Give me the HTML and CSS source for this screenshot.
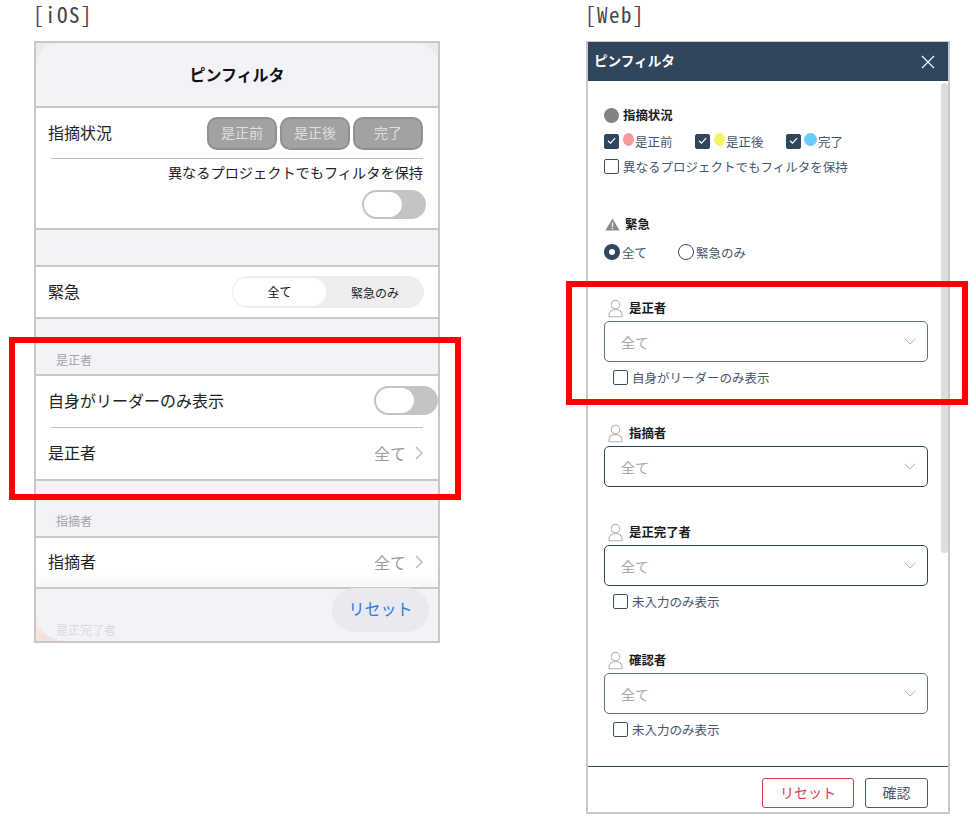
FILE: index.html
```html
<!DOCTYPE html>
<html lang="ja">
<head>
<meta charset="utf-8">
<title>ピンフィルタ</title>
<link rel="stylesheet" href="styles.css">
</head>
<body>
<svg class="defs" width="0" height="0" aria-hidden="true">
  <symbol id="person" viewBox="0 0 15 19">
    <circle cx="7.5" cy="5.6" r="4.3" fill="none" stroke="#b4b4b4" stroke-width="1.1"/>
    <path d="M1 17.8v-1.6c0-3.2 2.6-5 4.4-5.400h4.200c1.800.4 4.400 2.200 4.400 5.400v1.600z" fill="none" stroke="#b4b4b4" stroke-width="1.100" stroke-linejoin="round"/>
  </symbol>
  <symbol id="chev-down" viewBox="0 0 12 7">
    <path d="M.7.7 6 6l5.300-5.300" fill="none" stroke="#b0b0b0" stroke-width="1"/>
  </symbol>
  <symbol id="chev-right" viewBox="0 0 8 14">
    <path d="M1 1l6 6-6 6" fill="none" stroke="#b9b9b9" stroke-width="1.400"/>
  </symbol>
  <symbol id="tick" viewBox="0 0 15 15">
    <path d="M4 7.800l2.500 2.400 4.600-5" fill="none" stroke="#fff" stroke-width="1.200"/>
  </symbol>
</svg>

<main class="page">
  <section class="col col-ios">
    <h2 class="caption">[iOS]</h2>
    <div class="ios">
      <header class="ios-head"><span>ピンフィルタ</span></header>

      <div class="ios-card ios-status">
        <div class="ios-row-top">
          <span class="ios-label">指摘状況</span>
          <div class="ios-btns">
            <span class="ios-btn">是正前</span>
            <span class="ios-btn">是正後</span>
            <span class="ios-btn">完了</span>
          </div>
        </div>
        <div class="ios-divider ios-divider-status"></div>
        <p class="ios-keep">異なるプロジェクトでもフィルタを保持</p>
        <div class="ios-toggle ios-toggle-keep"><span class="ios-knob"></span></div>
      </div>

      <div class="ios-spacer"></div>

      <div class="ios-card ios-row ios-row-urgent">
        <span class="ios-label">緊急</span>
        <div class="ios-seg">
          <span class="ios-seg-item ios-seg-on">全て</span>
          <span class="ios-seg-item">緊急のみ</span>
        </div>
      </div>

      <div class="ios-section ios-section-first">是正者</div>
      <div class="ios-card">
        <div class="ios-row ios-row-leader">
          <span class="ios-label">自身がリーダーのみ表示</span>
          <div class="ios-toggle ios-toggle-edge"><span class="ios-knob"></span></div>
        </div>
        <div class="ios-divider"></div>
        <div class="ios-row ios-row-pick">
          <span class="ios-label">是正者</span>
          <span class="ios-value">全て<svg class="ios-chev"><use href="#chev-right"/></svg></span>
        </div>
      </div>

      <div class="ios-section">指摘者</div>
      <div class="ios-card ios-row ios-row-pick ios-row-fade">
        <span class="ios-label">指摘者</span>
        <span class="ios-value">全て<svg class="ios-chev"><use href="#chev-right"/></svg></span>
      </div>

      <div class="ios-corner"></div>
      <div class="ios-sheet"><span class="ios-faint">是正完了者</span></div>
      <button class="ios-reset" type="button">リセット</button>
    </div>
  </section>

  <section class="col col-web">
    <h2 class="caption">[Web]</h2>
    <div class="web">
      <header class="web-head">
        <span class="web-title">ピンフィルタ</span>
        <svg class="web-close" viewBox="0 0 14 14"><path d="M1 1l12 12M13 1 1 13" fill="none" stroke="#fff" stroke-width="1.100"/></svg>
      </header>

      <div class="web-body">
        <div class="web-scroll"></div>

        <div class="web-title-row web-title-status"><span class="dot dot-gray"></span><b>指摘状況</b></div>
        <div class="web-checks">
          <label class="web-check web-check-a"><span class="box box-on"><svg><use href="#tick"/></svg></span><span class="dot dot-pin dot-red"></span>是正前</label>
          <label class="web-check web-check-b"><span class="box box-on"><svg><use href="#tick"/></svg></span><span class="dot dot-pin dot-yellow"></span>是正後</label>
          <label class="web-check"><span class="box box-on"><svg><use href="#tick"/></svg></span><span class="dot dot-pin dot-blue"></span>完了</label>
        </div>
        <label class="web-check web-keep"><span class="box"></span>異なるプロジェクトでもフィルタを保持</label>

        <div class="web-title-row web-title-urgent">
          <svg class="tri" viewBox="0 0 15 13"><path d="M7.500.5 14.600 12.500H.4z" fill="#8b8b8b"/><path d="M7.500 4.500v4.500M7.500 10v1.200" stroke="#fff" stroke-width="1.200"/></svg>
          <b>緊急</b>
        </div>
        <div class="web-radios">
          <label class="web-radio web-radio-a"><span class="radio radio-on"></span>全て</label>
          <label class="web-radio"><span class="radio"></span>緊急のみ</label>
        </div>

        <div class="group group-1">
          <div class="group-head"><svg class="person"><use href="#person"/></svg><b>是正者</b></div>
          <div class="select select-soft"><span>全て</span><svg class="select-chev"><use href="#chev-down"/></svg></div>
          <label class="web-check sub-check"><span class="box"></span>自身がリーダーのみ表示</label>
        </div>

        <div class="group">
          <div class="group-head"><svg class="person"><use href="#person"/></svg><b>指摘者</b></div>
          <div class="select"><span>全て</span><svg class="select-chev"><use href="#chev-down"/></svg></div>
        </div>

        <div class="group group-tight">
          <div class="group-head"><svg class="person"><use href="#person"/></svg><b>是正完了者</b></div>
          <div class="select"><span>全て</span><svg class="select-chev"><use href="#chev-down"/></svg></div>
          <label class="web-check sub-check"><span class="box"></span>未入力のみ表示</label>
        </div>

        <div class="group group-wide">
          <div class="group-head"><svg class="person"><use href="#person"/></svg><b>確認者</b></div>
          <div class="select select-soft"><span>全て</span><svg class="select-chev"><use href="#chev-down"/></svg></div>
          <label class="web-check sub-check"><span class="box"></span>未入力のみ表示</label>
        </div>
      </div>

      <footer class="web-foot">
        <button class="web-btn web-btn-reset" type="button">リセット</button>
        <button class="web-btn web-btn-ok" type="button">確認</button>
      </footer>
    </div>
  </section>
</main>

<div class="mark mark-ios"></div>
<div class="mark mark-web"></div>
</body>
</html>
```

FILE: styles.css
```css
* { box-sizing: border-box; }

html, body { margin: 0; padding: 0; }

body {
  position: relative;
  width: 976px;
  height: 819px;
  overflow: hidden;
  background: #fff;
  color: #1c1c1e;
  font-family: "Noto Sans CJK JP", "Noto Sans", sans-serif;
}

.defs { position: absolute; }

.page { display: flex; align-items: flex-start; padding-left: 34px; }

.col-ios { width: 406px; }
.col-web { width: 364px; margin-left: 146px; }

.caption {
  height: 41px;
  margin: 0 0 0 -1px;
  color: #444;
  font-family: "Noto Sans Mono CJK JP", "Liberation Mono", monospace;
  font-size: 21px;
  font-weight: 400;
  letter-spacing: 1.500px;
  line-height: 29px;
}

/* iOS */
.ios {
  position: relative;
  height: 602px;
  overflow: hidden;
  border: 2px solid #c8c8c8;
  background: linear-gradient(#ebebee 0 20px, #f2f2f7 20px);
}

.ios-head {
  display: flex;
  align-items: center;
  justify-content: center;
  height: 63px;
  padding-bottom: 2px;
  border-radius: 22px 22px 0 0;
  background: #f2f2f7;
  font-size: 16px;
  font-weight: 700;
  color: #111;
}

.ios-card {
  border-top: 2px solid #c9c9cc;
  border-bottom: 2px solid #c9c9cc;
  background: #fff;
}

.ios-label { padding-bottom: 3px; font-size: 16px; line-height: 24px; color: #222; }

.ios-status { height: 124px; padding: 9px 15px 0 12px; }

.ios-row-top { display: flex; align-items: center; justify-content: space-between; height: 33px; }

.ios-btns { display: flex; gap: 3px; }

.ios-btn {
  display: flex;
  align-items: center;
  justify-content: center;
  width: 70px;
  height: 33px;
  padding-bottom: 3px;
  border: 2px solid #8f9096;
  border-radius: 10px;
  background: #a2a2a2;
  color: #dedede;
  font-size: 14px;
}

.ios-divider { height: 1px; margin: 0 15px; background: #bdbdbd; }

.ios-divider-status { margin: 8px 0 0 3px; }

.ios-keep { margin: 3px 0 0; font-size: 14.200px; line-height: 20px; text-align: right; color: #222; white-space: nowrap; }

.ios-toggle {
  width: 64px;
  height: 29px;
  padding: 2px;
  border-radius: 15px;
  background: #c4c4c4;
}

.ios-knob { display: block; width: 38px; height: 25px; border-radius: 13px; background: #fff; }

.ios-toggle-keep { margin: 8px -3px 0 auto; }

.ios-toggle-edge { margin: -3px -15px 0 0; }

.ios-spacer { height: 35px; }

.ios-row { display: flex; align-items: center; justify-content: space-between; padding: 0 15px 0 12px; }

.ios-row-urgent { height: 54px; }

.ios-seg {
  display: grid;
  grid-template-columns: 94px 98px;
  align-items: center;
  height: 32px;
  border-radius: 16px;
  background: #eeeef0;
  font-size: 12px;
  margin-right: -1px;
}

.ios-seg-item { text-align: center; }

.ios-seg-on { height: 28px; margin-left: 1px; line-height: 28px; border-radius: 14px; background: #fff; color: #111; }

.ios-section {
  height: 55px;
  padding: 31px 0 0 20px;
  color: #a4a4a8;
  font-size: 12px;
  line-height: 18px;
}

.ios-section-first { padding-top: 32px; }

.ios-row-leader { height: 51px; }

.ios-row-pick { height: 51px; }

.ios-row-fade {
  height: 53px;
  background: linear-gradient(#fff 70%, #f7f7fa);
}

.ios-value { display: flex; align-items: center; padding-bottom: 2px; color: #9c9c9c; font-size: 16px; line-height: 24px; }

.ios-chev { width: 8px; height: 14px; margin-left: 9px; }

.ios-corner {
  position: absolute;
  left: 0;
  bottom: 0;
  width: 40px;
  height: 34px;
  background: linear-gradient(#f4f1f3, #f6dfd8);
}

.ios-sheet {
  position: absolute;
  left: 0;
  right: 0;
  bottom: 0;
  height: 52px;
  padding: 27px 0 0 20px;
  border-bottom-left-radius: 28px;
  background: #f3f2f7;
}

.ios-faint { color: #dadade; font-size: 12px; line-height: 18px; }

.ios-reset {
  position: absolute;
  top: 545px;
  left: 296px;
  width: 97px;
  height: 44px;
  padding: 0 0 4px;
  border: 0;
  border-radius: 22px;
  background: #e9e9ee;
  color: #2a7ae2;
  font-family: inherit;
  font-size: 16px;
}

/* Web */
.web {
  display: flex;
  flex-direction: column;
  height: 773px;
  border: 2px solid #c8c8c8;
  border-top-width: 1px;
  background: #fff;
  color: #44566c;
}

.web-head {
  display: flex;
  align-items: center;
  justify-content: space-between;
  flex: none;
  height: 39px;
  padding: 0 13px 0 6px;
  background: #31465c;
  color: #fff;
}

.web-title { padding-bottom: 3px; font-size: 13.600px; font-weight: 700; }

.web-close { width: 14px; height: 14px; }

.web-body {
  position: relative;
  flex: 1;
  overflow: hidden;
  padding: 0 20px 0 16px;
  font-size: 12.500px;
}

.web-scroll {
  position: absolute;
  top: 2px;
  right: 0;
  width: 7px;
  height: 470px;
  border-radius: 4px;
  background: #dedede;
}

.web-body b { color: #1a1a1a; font-size: 12.400px; font-weight: 700; }

.web-title-row { display: flex; align-items: center; height: 18px; }

.web-title-status { margin-top: 25px; gap: 4px; }

.dot { display: block; flex: none; border-radius: 50%; }

.dot-gray { width: 15px; height: 15px; background: #828282; }

.dot-pin { width: 11px; height: 13px; margin: -4px 1px 0 0; }

.dot-red { background: #f49b9b; }
.dot-yellow { background: #f3f660; }
.dot-blue { background: #63d0f8; width: 13px; margin-left: -1px; }

.web-checks { display: flex; margin-top: 8px; }

.web-check { display: flex; align-items: center; height: 18px; white-space: nowrap; }

.web-check-a { width: 91px; }
.web-check-b { width: 91px; }

.box {
  display: block;
  flex: none;
  width: 15px;
  height: 15px;
  margin-right: 4px;
  border: 1.500px solid #3c5068;
  border-radius: 2px;
  background: #fff;
}

.box-on { position: relative; background: #31465c; border-color: #31465c; }

.box-on svg { position: absolute; top: -1.500px; left: -1.500px; width: 15px; height: 15px; }

.web-keep { margin-top: 7px; }

.web-title-urgent { margin-top: 40px; gap: 5px; }

.tri { width: 15px; height: 13px; margin-left: 1px; }

.web-radios { display: flex; margin-top: 10px; }

.web-radio { display: flex; align-items: center; height: 18px; }

.web-radio-a { width: 74px; }

.radio {
  display: block;
  flex: none;
  width: 16px;
  height: 16px;
  margin-right: 2px;
  border: 1.500px solid #31465c;
  border-radius: 50%;
  background: #fff;
}

.radio-on { border: 5px solid #31465c; }

.group { margin-top: 38px; }

.group-1 { margin-top: 38px; }
.group-tight { margin-top: 36px; }
.group-wide { margin-top: 41px; }

.group-head { display: flex; align-items: center; height: 22px; padding: 0 0 4px 4px; gap: 6px; }

.person { width: 15px; height: 19px; }

.select {
  display: flex;
  align-items: center;
  justify-content: space-between;
  height: 41px;
  padding: 0 11px 0 16px;
  border: 1.500px solid #31465c;
  border-radius: 5px;
  color: #a8a8a8;
  font-size: 14px;
}

.select-soft { border-color: #5f7286; }

.select-chev { width: 12px; height: 7px; }

.sub-check { margin: 6px 0 0 9px; }

.web-foot {
  display: flex;
  align-items: flex-end;
  justify-content: flex-end;
  flex: none;
  gap: 11px;
  height: 46px;
  padding: 0 20px 4px 0;
  border-top: 1.500px solid #31465c;
}

.web-btn {
  height: 30px;
  padding: 0 0 2px;
  border-radius: 3px;
  background: #fff;
  font-family: inherit;
  font-size: 14px;
}

.web-btn-reset { width: 92px; border: 1.500px solid #d93a40; color: #d93a40; }
.web-btn-ok { width: 63px; border: 1.500px solid #4a5d72; color: #4a5d72; }

/* annotation frames lying over the screenshots */
.mark { position: absolute; border: 6px solid #f00; }
.mark-ios { top: 337px; left: 9px; width: 452px; height: 163px; }
.mark-web { top: 281px; left: 566px; width: 402px; height: 124px; }
```
